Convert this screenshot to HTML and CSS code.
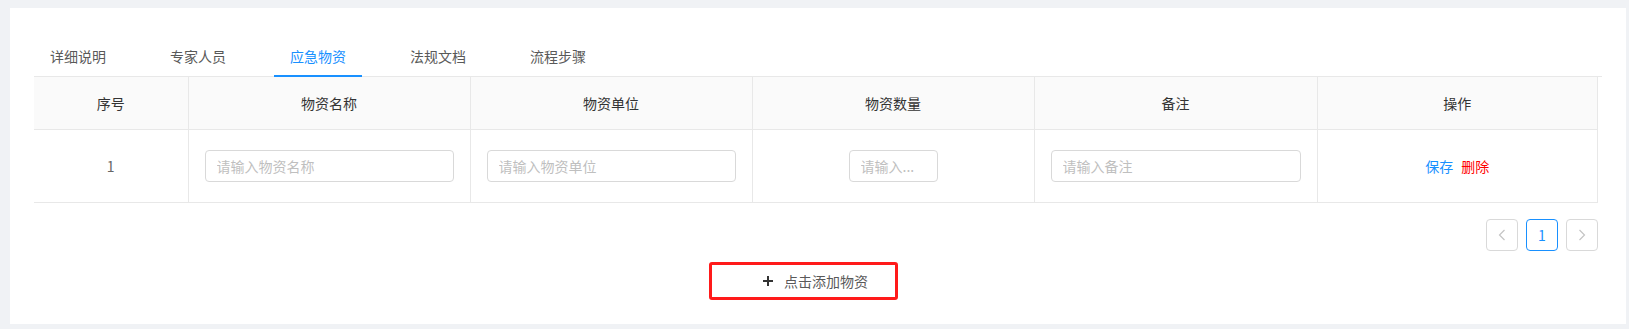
FILE: index.html
```html
<!DOCTYPE html>
<html lang="zh-CN">
<head>
<meta charset="utf-8">
<title>应急物资</title>
<link rel="stylesheet" href="styles.css">
</head>
<body>
<div class="card">
  <div class="tabs">
    <div class="tab">详细说明</div>
    <div class="tab">专家人员</div>
    <div class="tab active">应急物资</div>
    <div class="tab">法规文档</div>
    <div class="tab">流程步骤</div>
  </div>
  <table class="grid">
    <colgroup>
      <col class="c-idx"><col class="c-w"><col class="c-w"><col class="c-w"><col class="c-w5"><col>
    </colgroup>
    <thead>
      <tr><th>序号</th><th>物资名称</th><th>物资单位</th><th>物资数量</th><th>备注</th><th>操作</th></tr>
    </thead>
    <tbody>
      <tr>
        <td class="idx">1</td>
        <td><input class="field" placeholder="请输入物资名称"></td>
        <td><input class="field" placeholder="请输入物资单位"></td>
        <td class="center"><input class="field small" placeholder="请输入..."></td>
        <td><input class="field" placeholder="请输入备注"></td>
        <td class="center"><span class="act save">保存</span><span class="act del">删除</span></td>
      </tr>
    </tbody>
  </table>
  <div class="pager">
    <div class="pg disabled"><svg width="8" height="12" viewBox="0 0 8 12"><path d="M6.5 1 L1.5 6 L6.5 11" fill="none" stroke="#c4c4c4" stroke-width="1.2"/></svg></div>
    <div class="pg current">1</div>
    <div class="pg disabled"><svg width="8" height="12" viewBox="0 0 8 12"><path d="M1.5 1 L6.5 6 L1.5 11" fill="none" stroke="#c4c4c4" stroke-width="1.2"/></svg></div>
  </div>
  <div class="add-wrap">
    <div class="add-btn">
      <svg class="plus" width="10" height="10" viewBox="0 0 10 10"><path d="M5 0 V10 M0 5 H10" stroke="#333" stroke-width="2"/></svg>
      <span>点击添加物资</span>
    </div>
  </div>
</div>
</body>
</html>
```
FILE: styles.css
```css
html, body {
  margin: 0;
  padding: 0;
}
body {
  background: #f0f2f5;
  font-family: "Noto Sans CJK SC", "Noto Sans", sans-serif;
  font-size: 14px;
  color: #333;
  overflow: hidden;
}
.card {
  background: #fff;
  margin: 8px 3px 0 10px;
  height: 316px;
  box-sizing: border-box;
  padding: 25px 24px 0 24px;
}
.tabs {
  display: flex;
  gap: 32px;
  border-bottom: 1px solid #e8e8e8;
}
.tab {
  position: relative;
  padding: 12px 16px 9px;
  line-height: 22px;
  color: #595959;
}
.tab.active {
  color: #1890ff;
}
.tab.active::after {
  content: "";
  position: absolute;
  left: 0;
  right: 0;
  bottom: -1px;
  height: 2px;
  background: #1890ff;
}
.grid {
  width: calc(100% - 4px);
  table-layout: fixed;
  border-collapse: collapse;
}
.c-idx { width: 154px; }
.c-w { width: 282px; }
.c-w5 { width: 283px; }
.grid th {
  background: #fafafa;
  font-weight: normal;
  color: #333;
  padding: 16px;
  line-height: 20px;
  border-bottom: 1px solid #e8e8e8;
  border-right: 1px solid #e8e8e8;
  text-align: center;
}
.grid td {
  padding: 20px 16px;
  border-bottom: 1px solid #e8e8e8;
  border-right: 1px solid #e8e8e8;
  line-height: 32px;
}
.grid td.idx {
  text-align: center;
  color: #666;
}
.grid td.center {
  text-align: center;
}
.field {
  display: block;
  width: 100%;
  box-sizing: border-box;
  height: 32px;
  border: 1px solid #d9d9d9;
  border-radius: 4px;
  padding: 4px 11px;
  font-family: inherit;
  font-size: 14px;
  color: #333;
  outline: none;
}
.field::placeholder {
  color: #bfbfbf;
}
.field.small {
  width: 89px;
  margin: 0 auto;
}
.act {
  cursor: pointer;
}
.act.save {
  color: #1890ff;
  margin-right: 8px;
}
.act.del {
  color: #ff0000;
}
.pager {
  display: flex;
  justify-content: flex-end;
  gap: 8px;
  margin: 16px 4px 0 0;
}
.pg {
  width: 32px;
  height: 32px;
  box-sizing: border-box;
  border: 1px solid #d9d9d9;
  border-radius: 4px;
  display: flex;
  align-items: center;
  justify-content: center;
  color: #1890ff;
}
.pg.current {
  border-color: #1890ff;
}
.add-wrap {
  display: flex;
  justify-content: center;
  padding-right: 29px;
  margin-top: 11px;
}
.add-btn {
  display: flex;
  align-items: center;
  gap: 11px;
  height: 38px;
  box-sizing: border-box;
  border: 3px solid #ff1a1a;
  border-radius: 3px;
  padding: 0 27px 0 51px;
  color: #595959;
  cursor: pointer;
}
.plus {
  display: block;
}
```
